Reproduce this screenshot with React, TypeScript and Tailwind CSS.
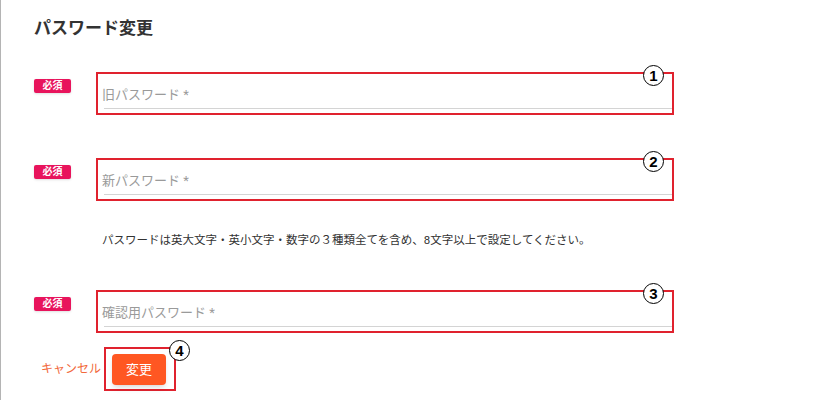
import React from "react";

const Marker = ({ n, className }: { n: number; className: string }) => (
  <span
    className={`absolute flex h-[21px] w-[21px] items-center justify-center rounded-full border-[1.5px] border-black bg-white text-[15px] leading-none font-bold text-black font-['Liberation_Sans',sans-serif] ${className}`}
  >
    {n}
  </span>
);

const Badge = () => (
  <span className="mt-[7px] flex h-[14px] w-[37px] shrink-0 items-center justify-center rounded-[2px] bg-[#e8145c] text-[10px] leading-none font-bold text-white shadow-sm">
    必須
  </span>
);

const PasswordField = ({ label, n }: { label: string; n: number }) => (
  <div className="flex items-start">
    <Badge />
    <div className="relative ml-[25px] w-[578px] border-2 border-[#e0222e] pb-[4px] pl-[4px]">
      <div className="ml-[2px] border-b border-[#d4d4d4] pt-[13px] pb-[5px] text-[13px] leading-[16px] text-[#9a9a9a]">
        <span className="-ml-[2px]">{label}</span>
      </div>
      <Marker n={n} className="-top-[9px] right-[8px]" />
    </div>
  </div>
);

export default function App() {
  return (
    <div className="h-[400px] w-[824px] overflow-hidden border-l border-[#b4b4b4] bg-white pl-[33px] font-['Roboto','Noto_Sans_CJK_JP',sans-serif] text-[#333]">
      <h2 className="pt-[16px] text-[17px] leading-[24px] font-bold text-[#333]">
        パスワード変更
      </h2>

      <div className="mt-[32px]">
        <PasswordField label="旧パスワード *" n={1} />
      </div>

      <div className="mt-[43px]">
        <PasswordField label="新パスワード *" n={2} />
      </div>

      <p className="mt-[31px] ml-[68px] text-[11.5px] leading-[16px] text-[#333]">
        パスワードは英大文字・英小文字・数字の３種類全てを含め、8文字以上で設定してください。
      </p>

      <div className="mt-[42px]">
        <PasswordField label="確認用パスワード *" n={3} />
      </div>

      <div className="mt-[14px] ml-[7px] flex items-center">
        <span className="w-[63px] shrink-0 whitespace-nowrap text-[12px] leading-[16px] text-[#f2683a]">
          キャンセル
        </span>
        <div className="relative border-2 border-[#e0222e] pt-[5px] pr-[8px] pb-[4px] pl-[6px]">
          <button className="flex h-[31px] w-[54px] items-center justify-center rounded-[4px] bg-[#ff5722] text-[13px] text-white shadow-md">
            変更
          </button>
          <Marker n={4} className="-top-[9px] -right-[16px]" />
        </div>
      </div>
    </div>
  );
}
